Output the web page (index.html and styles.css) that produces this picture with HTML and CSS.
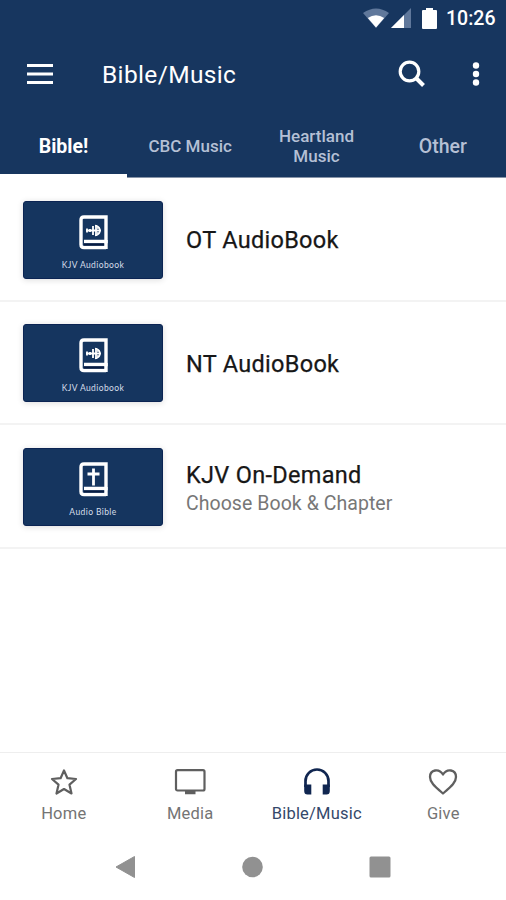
FILE: index.html
```html
<!DOCTYPE html>
<html lang="en">
<head>
<meta charset="utf-8">
<title>Bible/Music</title>
<link rel="stylesheet" href="styles.css">
</head>
<body>
<header class="header">
  <div class="status">
    <svg class="wifi" width="26" height="20" viewBox="0 0 26 20"><path d="M0 5Q13-4 26 5L13 20Z" fill="#60789b"/><path d="M4.800 10Q13 4.500 21.200 10L13 19.500Z" fill="#fff"/></svg>
    <svg class="signal" width="20" height="20" viewBox="0 0 20 20"><path d="M20 0V20H0Z" fill="#60789b"/><path d="M13 7V20H0Z" fill="#fff"/></svg>
    <svg class="battery" width="15" height="21" viewBox="0 0 15 21"><path d="M1 2H4V0H11V2H14Q15 2 15 3V20Q15 21 14 21H1Q0 21 0 20V3Q0 2 1 2Z" fill="#fff"/></svg>
    <span class="time">10:26</span>
  </div>
  <div class="toolbar">
    <svg class="menu" width="26" height="20" viewBox="0 0 26 20"><path d="M0 1.500H26M0 10H26M0 18.500H26" stroke="#fff" stroke-width="3"/></svg>
    <h1 class="title">Bible/Music</h1>
    <svg class="search" width="28" height="28" viewBox="0 0 28 28" fill="none" stroke="#fff"><circle cx="11.500" cy="11.500" r="9.300" stroke-width="3.200"/><path d="M18 18L25.500 25.500" stroke-width="4"/></svg>
    <svg class="more" width="8" height="24" viewBox="0 0 8 24" fill="#fff"><circle cx="4" cy="3.500" r="3.200"/><circle cx="4" cy="12" r="3.200"/><circle cx="4" cy="20.500" r="3.200"/></svg>
  </div>
  <nav class="tabs">
    <span class="tab active">Bible!</span>
    <span class="tab small">CBC Music</span>
    <span class="tab small">Heartland<br>Music</span>
    <span class="tab">Other</span>
  </nav>
</header>
<main class="list">
  <article class="row">
    <div class="thumb">
      <svg width="29" height="35" viewBox="0 0 29 35" fill="none" stroke="#fff"><path d="M27 32.500H5Q2 32.500 2 29.500V5Q2 2 5 2H27V26.500H5" stroke-width="3.400"/><path d="M27 25V34" stroke-width="3.400"/><path d="M5 29.500H25" stroke="#071c42" stroke-width="2.200"/><path d="M8 13.500V17.500M11 14V17M7 15.500H22M14 11V20M17 10V21" stroke-width="1.800"/><path d="M16 10.500A5 5 0 0 1 16 20.500M18 13H21M18 18H21" stroke-width="1.500"/></svg>
      <span class="caption">KJV Audiobook</span>
    </div>
    <h2 class="name">OT AudioBook</h2>
  </article>
  <article class="row">
    <div class="thumb">
      <svg width="29" height="35" viewBox="0 0 29 35" fill="none" stroke="#fff"><path d="M27 32.500H5Q2 32.500 2 29.500V5Q2 2 5 2H27V26.500H5" stroke-width="3.400"/><path d="M27 25V34" stroke-width="3.400"/><path d="M5 29.500H25" stroke="#071c42" stroke-width="2.200"/><path d="M8 13.500V17.500M11 14V17M7 15.500H22M14 11V20M17 10V21" stroke-width="1.800"/><path d="M16 10.500A5 5 0 0 1 16 20.500M18 13H21M18 18H21" stroke-width="1.500"/></svg>
      <span class="caption">KJV Audiobook</span>
    </div>
    <h2 class="name">NT AudioBook</h2>
  </article>
  <article class="row">
    <div class="thumb">
      <svg width="29" height="35" viewBox="0 0 29 35" fill="none" stroke="#fff"><path d="M27 32.500H5Q2 32.500 2 29.500V5Q2 2 5 2H27V26.500H5" stroke-width="3.400"/><path d="M27 25V34" stroke-width="3.400"/><path d="M5 29.500H25" stroke="#071c42" stroke-width="2.200"/><path d="M14.500 6.500V23.500M8.500 12H20.500" stroke-width="2.800"/></svg>
      <span class="caption">Audio Bible</span>
    </div>
    <div class="text">
      <h2 class="name">KJV On-Demand</h2>
      <p class="sub">Choose Book &amp; Chapter</p>
    </div>
  </article>
</main>
<nav class="bottom">
  <div class="item">
    <svg width="30" height="30" viewBox="0 0 30 30" fill="none" stroke="#5f5f5f" stroke-width="2.200" stroke-linejoin="round"><path d="M15 3.500L18.400 11.200L27 12L20.500 17.700L22.500 26.500L15 22L7.500 26.500L9.500 17.700L3 12L11.600 11.200Z"/></svg>
    <span class="label">Home</span>
  </div>
  <div class="item">
    <svg width="32" height="30" viewBox="0 0 32 30" fill="none" stroke="#5f5f5f"><rect x="2" y="3.200" width="28.500" height="20.300" rx="1.500" stroke-width="2.200"/><path d="M11 25.500H21.500" stroke-width="3.500"/></svg>
    <span class="label">Media</span>
  </div>
  <div class="item selected">
    <svg width="30" height="30" viewBox="0 0 30 30"><path d="M3.500 20V14A11.500 11.500 0 0 1 26.500 14V20" fill="none" stroke="#102650" stroke-width="2.700"/><path d="M2.200 17.500H9.300V27.500H5.500Q2.200 27.500 2.200 24ZM20.700 17.500H27.800V24Q27.800 27.500 24.500 27.500H20.700Z" fill="#102650"/></svg>
    <span class="label">Bible/Music</span>
  </div>
  <div class="item">
    <svg width="30" height="30" viewBox="0 0 30 30" fill="none" stroke="#5f5f5f" stroke-width="2.300" stroke-linejoin="round"><path d="M15 26.500C7 19.500 2 15.500 2 10C2 2.500 11 1 15 7.500C19 1 28 2.500 28 10C28 15.500 23 19.500 15 26.500Z"/></svg>
    <span class="label">Give</span>
  </div>
</nav>
<footer class="system">
  <svg width="20" height="24" viewBox="0 0 20 24"><path d="M19.500 1.500V22.500L1 12Z" fill="#919191" stroke="#919191" stroke-linejoin="round"/></svg>
  <svg width="21" height="24" viewBox="0 0 21 24"><circle cx="10.500" cy="12" r="10.300" fill="#919191"/></svg>
  <svg width="22" height="24" viewBox="0 0 22 24"><rect x=".5" y="1.500" width="21" height="21" rx="1.500" fill="#919191"/></svg>
</footer>
</body>
</html>
```
FILE: styles.css
```css
* { box-sizing: border-box; }
body {
  margin: 0;
  height: 900px;
  display: flex;
  flex-direction: column;
  background: #fff;
  font-family: Roboto, sans-serif;
  overflow: hidden;
}
h1, h2, p { margin: 0; font-weight: 400; white-space: nowrap; }
svg { display: block; flex: none; }

.header { height: 178px; background: #17365f; color: #fff; }
.status {
  height: 37px;
  display: flex;
  align-items: center;
  justify-content: flex-end;
  padding-right: 10px;
}
.wifi, .signal { margin-top: -2px; }
.signal { margin-left: 2px; }
.battery { margin: -1px 0 0 11px; }
.time { margin-left: 9px; font-size: 19.5px; font-weight: 500; width: 50px; }
.toolbar { height: 75px; display: flex; align-items: center; padding: 0 26px 0 27px; }
.menu { margin-top: -2px; }
.title { margin-left: 49px; font-size: 24.5px; letter-spacing: .35px; flex: 1; }
.search { margin: -2px 46px 0 0; }
.more { margin-top: -2px; }
.tabs { height: 66px; display: grid; grid-template-columns: 127px repeat(3, 1fr); }
.tab {
  display: flex;
  align-items: center;
  justify-content: center;
  text-align: center;
  padding: 7px 0 3px;
  border-bottom: 1px solid #8794a8;
  color: #b5c0d5;
  font-size: 19.5px;
  line-height: 20px;
  font-weight: 500;
}
.tab.small { font-size: 17px; padding-top: 5px; }
.tab.active { padding-bottom: 0; color: #fff; border-bottom: 4px solid #fff; font-weight: 700; }

.row {
  height: 123.5px;
  display: flex;
  align-items: center;
  gap: 23px;
  padding: 2px 0 0 23px;
  border-bottom: 2px solid #f3f3f3;
}
.thumb {
  width: 140px;
  height: 78px;
  display: flex;
  flex-direction: column;
  align-items: center;
  padding-top: 13px;
  border: 1px solid #0b2453;
  border-radius: 3px;
  background: #15355f;
  box-shadow: 0 1px 6px rgba(0, 0, 0, .14);
}
.caption { margin-top: 9px; color: #d5deea; font: 8.5px/12px Lato, sans-serif; letter-spacing: .4px; white-space: nowrap; }
.name { padding-top: 1px; color: #171717; font-size: 23.5px; line-height: 30px; letter-spacing: .3px; -webkit-text-stroke: .25px; }
.text { padding-top: 3px; }
.sub { color: #777; font-size: 19.5px; line-height: 28px; letter-spacing: .05px; }

.bottom {
  height: 83px;
  margin-top: auto;
  display: grid;
  grid-template-columns: repeat(4, 1fr);
  border-top: 1px solid #eee;
}
.item { display: flex; flex-direction: column; align-items: center; padding: 14px 0 0 1px; color: #747474; }
.item.selected { color: #34486a; }
.label { margin-top: 7px; font-size: 16.5px; line-height: 20px; letter-spacing: .2px; }
.system { height: 65px; display: flex; justify-content: space-between; align-items: center; padding: 0 115px 2px 115px; }
```
